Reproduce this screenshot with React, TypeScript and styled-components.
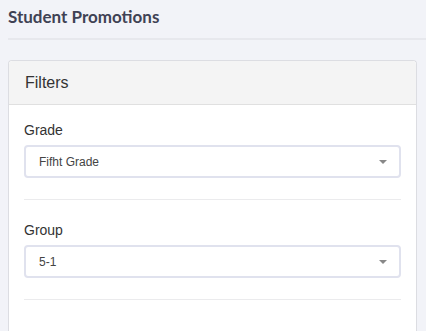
import React from "react";
import styled, { createGlobalStyle } from "styled-components";

const GlobalStyle = createGlobalStyle`
  body {
    margin: 0;
    background: #f2f3f8;
    font-family: "Liberation Sans", Arial, sans-serif;
  }
`;

interface FilterField {
  label: string;
  value: string;
}

const fields: FilterField[] = [
  { label: "Grade", value: "Fifht Grade" },
  { label: "Group", value: "5-1" },
];

const App = () => {
  return (
    <Page>
      <GlobalStyle />
      <PageHeader>
        <Title>Student Promotions</Title>
      </PageHeader>
      <Card>
        <CardHeader>Filters</CardHeader>
        <CardBody>
          {fields.map((field) => (
            <Field key={field.label}>
              <Label>{field.label}</Label>
              <Select>
                <SelectValue>{field.value}</SelectValue>
                <Caret />
              </Select>
            </Field>
          ))}
        </CardBody>
      </Card>
    </Page>
  );
};

const Page = styled.div`
  padding: 0 0 0 8px;
  min-height: 331px;
  box-sizing: border-box;
`;

const PageHeader = styled.div`
  height: 40px;
  border-bottom: 2px solid #e7e8ed;
  display: flex;
  align-items: center;
  padding-bottom: 5px;
  box-sizing: border-box;
`;

const Title = styled.h1`
  margin: 0;
  font-family: Lato, "Liberation Sans", sans-serif;
  font-size: 17px;
  font-weight: 700;
  color: #3f4254;
`;

const Card = styled.div`
  margin-top: 20px;
  width: 409px;
  box-sizing: border-box;
  background: #fff;
  border: 1px solid #dcdde2;
  border-bottom: none;
  border-radius: 4px 4px 0 0;
`;

const CardHeader = styled.div`
  height: 44px;
  box-sizing: border-box;
  background: #f4f4f4;
  border-bottom: 1px solid #e0e0e0;
  border-radius: 4px 4px 0 0;
  padding: 0 16px;
  display: flex;
  align-items: center;
  font-size: 16px;
  color: #333;
`;

const CardBody = styled.div`
  padding: 15px 15px 40px;
  display: flex;
  flex-direction: column;
  gap: 20px;
`;

const Field = styled.div`
  display: flex;
  flex-direction: column;
  padding-bottom: 21px;
  border-bottom: 1px solid #ebebed;
`;

const Label = styled.div`
  font-size: 14px;
  line-height: 20px;
  color: #333;
  margin-bottom: 5px;
`;

const Select = styled.div`
  height: 33px;
  box-sizing: border-box;
  border: 2px solid #e0e2ee;
  border-radius: 4px;
  display: flex;
  align-items: center;
  justify-content: space-between;
  padding: 0 12px 0 13px;
`;

const SelectValue = styled.span`
  font-size: 12px;
  color: #444;
`;

const Caret = styled.span`
  width: 0;
  height: 0;
  border-left: 4px solid transparent;
  border-right: 4px solid transparent;
  border-top: 4px solid #888;
`;

export default App;
